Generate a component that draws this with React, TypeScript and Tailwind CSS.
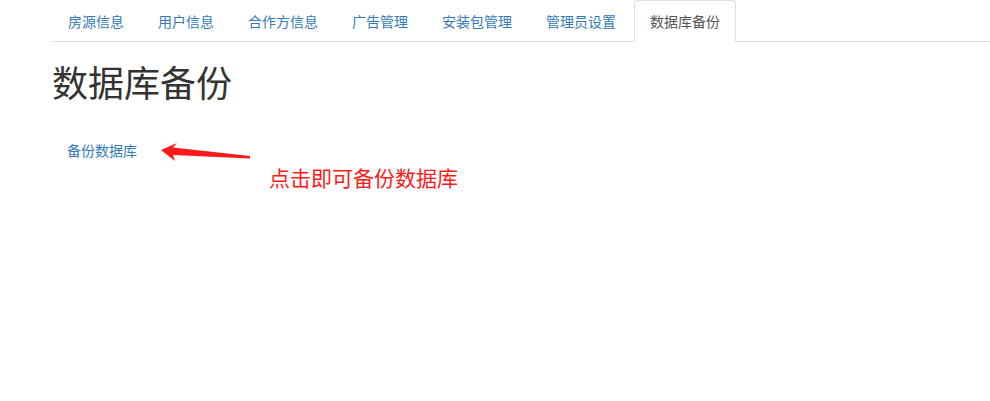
import React from "react";

const tabs = ["房源信息", "用户信息", "合作方信息", "广告管理", "安装包管理", "管理员设置", "数据库备份"];

export default function App() {
  return (
    <div
      className="relative w-[990px] h-[401px] bg-white overflow-hidden"
      style={{ fontFamily: '"Noto Sans CJK SC", "Liberation Sans", sans-serif' }}
    >
      <div className="pl-[52px]">
        <ul className="flex border-b border-[#dddddd] text-[14px] leading-[20px]">
          {tabs.map((t, i) => {
            const active = i === tabs.length - 1;
            return (
              <li key={t} className="mr-[2px] mb-[-1px]">
                <a
                  className={
                    "block px-[15px] py-[10px] border rounded-t-[4px] " +
                    (active
                      ? "border-[#dddddd] border-b-white bg-white text-[#555555]"
                      : "border-transparent text-[#337ab7]")
                  }
                >
                  {t}
                </a>
              </li>
            );
          })}
        </ul>
        <h1 className="mt-[19px] mb-[10px] text-[36px] leading-[40px] text-[#333333] font-normal">数据库备份</h1>
        <ul className="mt-[29px] flex text-[14px] leading-[20px]">
          <li>
            <a className="block px-[15px] py-[10px] text-[#337ab7]">备份数据库</a>
          </li>
        </ul>
      </div>
      <svg className="absolute left-0 top-0" width="990" height="401" viewBox="0 0 990 401">
        <polygon
          points="161,150 177,143 173,147.5 250,156 250,158.5 173,155 175,161"
          fill="#ff1a1a"
        />
      </svg>
      <div className="absolute left-[269px] top-[162px] text-[21px] leading-[30px] text-[#ff1a1a]">
        点击即可备份数据库
      </div>
    </div>
  );
}
